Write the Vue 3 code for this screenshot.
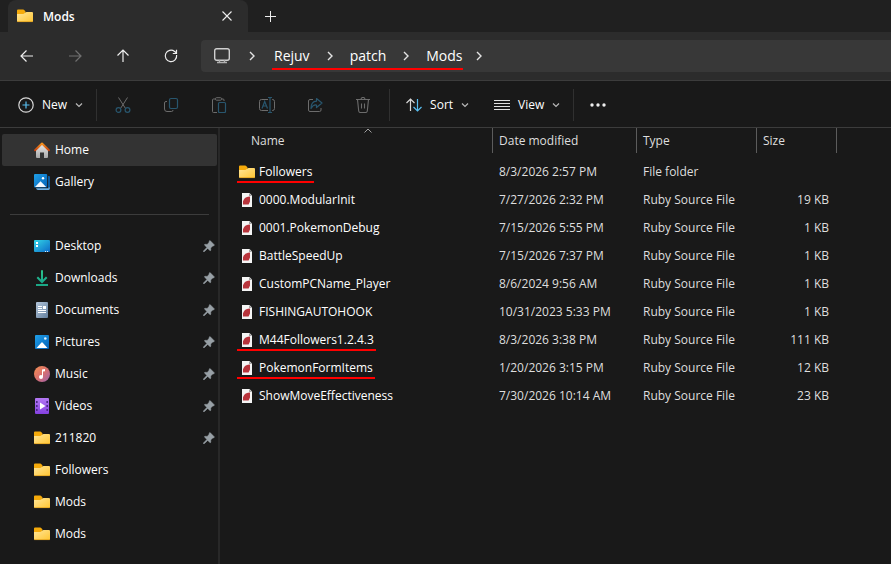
<script setup>
import { ref } from "vue";

const crumbs = ["Rejuv", "patch", "Mods"];

const tools = [
  { id: "cut", label: "Cut" },
  { id: "copy", label: "Copy" },
  { id: "paste", label: "Paste" },
  { id: "rename", label: "Rename" },
  { id: "share", label: "Share" },
  { id: "delete", label: "Delete" },
];

const mainPlaces = [
  { name: "Home", icon: "home" },
  { name: "Gallery", icon: "gallery" },
];

const quickAccess = [
  { name: "Desktop", icon: "desktop", pinned: true },
  { name: "Downloads", icon: "downloads", pinned: true },
  { name: "Documents", icon: "documents", pinned: true },
  { name: "Pictures", icon: "pictures", pinned: true },
  { name: "Music", icon: "music", pinned: true },
  { name: "Videos", icon: "videos", pinned: true },
  { name: "211820", icon: "folder", pinned: true },
  { name: "Followers", icon: "folder" },
  { name: "Mods", icon: "folder" },
  { name: "Mods", icon: "folder" },
];

const files = [
  { name: "Followers", date: "8/3/2026 2:57 PM", type: "File folder", size: "", marked: true },
  { name: "0000.ModularInit", date: "7/27/2026 2:32 PM", type: "Ruby Source File", size: "19 KB" },
  { name: "0001.PokemonDebug", date: "7/15/2026 5:55 PM", type: "Ruby Source File", size: "1 KB" },
  { name: "BattleSpeedUp", date: "7/15/2026 7:37 PM", type: "Ruby Source File", size: "1 KB" },
  { name: "CustomPCName_Player", date: "8/6/2024 9:56 AM", type: "Ruby Source File", size: "1 KB" },
  { name: "FISHINGAUTOHOOK", date: "10/31/2023 5:33 PM", type: "Ruby Source File", size: "1 KB" },
  { name: "M44Followers1.2.4.3", date: "8/3/2026 3:38 PM", type: "Ruby Source File", size: "111 KB", marked: true },
  { name: "PokemonFormItems", date: "1/20/2026 3:15 PM", type: "Ruby Source File", size: "12 KB", marked: true },
  { name: "ShowMoveEffectiveness", date: "7/30/2026 10:14 AM", type: "Ruby Source File", size: "23 KB" },
];

const activePlace = ref("Home");
</script>

<template>
  <div class="explorer">
    <svg class="sprite" width="0" height="0" aria-hidden="true">
      <defs>
        <linearGradient id="g-folder" x1="0" y1="0" x2="1" y2="1">
          <stop offset="0" stop-color="#ffe69a" />
          <stop offset="1" stop-color="#ffc532" />
        </linearGradient>
        <linearGradient id="g-roof" x1="0" y1="0" x2="0" y2="1">
          <stop offset="0" stop-color="#f7931e" />
          <stop offset="1" stop-color="#c8440f" />
        </linearGradient>
        <linearGradient id="g-wall" x1="0" y1="0" x2="0" y2="1">
          <stop offset="0" stop-color="#e8e8e8" />
          <stop offset="1" stop-color="#a8a8a8" />
        </linearGradient>
        <linearGradient id="g-blue" x1="0" y1="0" x2="1" y2="1">
          <stop offset="0" stop-color="#1fa0e8" />
          <stop offset="1" stop-color="#0562b8" />
        </linearGradient>
        <linearGradient id="g-desktop" x1="0" y1="0" x2="1" y2="1">
          <stop offset="0" stop-color="#33d6e6" />
          <stop offset="1" stop-color="#0c6ac8" />
        </linearGradient>
        <linearGradient id="g-download" x1="0" y1="0" x2="0" y2="16" gradientUnits="userSpaceOnUse">
          <stop offset="0" stop-color="#2cc48c" />
          <stop offset="1" stop-color="#14a08c" />
        </linearGradient>
        <linearGradient id="g-doc" x1="0" y1="0" x2="1" y2="1">
          <stop offset="0" stop-color="#b4c6da" />
          <stop offset="1" stop-color="#64809e" />
        </linearGradient>
        <linearGradient id="g-music" x1="0" y1="0" x2="1" y2="1">
          <stop offset="0" stop-color="#f49050" />
          <stop offset="0.5" stop-color="#d9706e" />
          <stop offset="1" stop-color="#9a60b0" />
        </linearGradient>
        <linearGradient id="g-video" x1="0" y1="0" x2="0" y2="1">
          <stop offset="0" stop-color="#b478f4" />
          <stop offset="1" stop-color="#8440e0" />
        </linearGradient>
      </defs>
      <symbol id="i-folder" viewBox="0 0 16 16">
        <path d="M0 2.500q0-1 1-1h5.200q.6 0 1 .5l1.300 1.500V7H0z" fill="#f5aa0a" />
        <path d="M0 6h6.200q.6 0 1-.4l1.300-1.100q.4-.5 1-.5H15q1 0 1 1v8q0 1-1 1H1q-1 0-1-1z" fill="url(#g-folder)" />
        <path d="M.2 13.600h15.600" stroke="#e0a01e" stroke-width=".8" />
      </symbol>
      <symbol id="i-home" viewBox="0 0 16 16">
        <path d="M2 7.500 8 2l6 5.500v7.500q0 1-1 1h-3v-5.500H6V16H3q-1 0-1-1z" fill="url(#g-wall)" />
        <path d="M1.100 8.200 8 1.500l6.900 6.700" fill="none" stroke="url(#g-roof)" stroke-width="2" stroke-linecap="round" stroke-linejoin="round" />
      </symbol>
      <symbol id="i-gallery" viewBox="0 0 16 16">
        <path d="M14 2h1q1 0 1 1v10.500q0 .5-.6.5H14z" fill="#0a5aa0" />
        <path d="M2 14.200h12.500v-.7H16q0 2.500-1.500 2.500H4q-1.500 0-2-1.800z" fill="#6aaee4" />
        <rect width="13.200" height="13.500" rx="1" fill="url(#g-blue)" />
        <circle cx="9" cy="4.200" r="1.200" fill="#fff" />
        <path d="M1 13 6.500 7.300 12.200 13z" fill="#f2f8ff" />
      </symbol>
      <symbol id="i-desktop" viewBox="0 0 16 16">
        <rect y="2" width="16" height="12" rx="1" fill="url(#g-desktop)" />
        <path d="M2 4h2v2H2zM2 7h2v2H2z" fill="#fff" />
        <path d="M11 13h1v1h-1zM13 13h1v1h-1z" fill="#d8ecfa" />
      </symbol>
      <symbol id="i-downloads" viewBox="0 0 16 16">
        <path d="M8 .3v11M3.300 7.300 8 12l4.700-4.700" fill="none" stroke="url(#g-download)" stroke-width="2" />
        <path d="M2 14h12v2H2z" fill="#1ba886" />
      </symbol>
      <symbol id="i-documents" viewBox="0 0 16 16">
        <rect x="2" width="12" height="16" rx="1" fill="url(#g-doc)" />
        <path d="M4 4h4v1H4zM4 6h4v1H4zM9 4h3v3H9zM4 8h8v1H4zM4 10h8v1H4z" fill="#fff" />
      </symbol>
      <symbol id="i-pictures" viewBox="0 0 16 16">
        <rect x="1" y="1" width="14" height="14" rx="1" fill="url(#g-blue)" />
        <circle cx="11.300" cy="4.500" r="1.300" fill="#e0f2ff" />
        <path d="m2.500 14 5-5.600q.5-.5 1 0l5 5.600z" fill="#fff" />
      </symbol>
      <symbol id="i-music" viewBox="0 0 16 16">
        <circle cx="8" cy="8" r="8" fill="url(#g-music)" />
        <path d="M8 3.500 11 3v2.200l-2 .4V11H8z" fill="#fff" />
        <circle cx="7" cy="11" r="2" fill="#fff" />
      </symbol>
      <symbol id="i-videos" viewBox="0 0 16 16">
        <rect x="1" width="14" height="16" rx="1" fill="url(#g-video)" />
        <path d="M2 3h1.600v2H2zM2 7h1.600v2H2zM2 11h1.600v2H2zM12.400 3H14v2h-1.600zM12.400 7H14v2h-1.600zM12.400 11H14v2h-1.600z" fill="#4a2a86" />
        <path d="M6 4.500v7L11.500 8z" fill="#fff" />
      </symbol>
      <symbol id="i-file" viewBox="0 0 16 16">
        <path d="M3 1h7.500L13 3.500V15H3z" fill="#f4f4f4" />
        <path d="M10 1v3h3z" fill="#a4a4a4" />
        <path d="M4 12.500V9.200Q5.500 5 9 4.700l2-.2v5L9.600 12.500z" fill="#b8343c" />
      </symbol>
      <symbol id="i-pin" viewBox="0 0 12 12">
        <path d="M7.300.8 11.200 4.700q.5.700-.4 1L9.400 6.200 7.700 8l.1 2q-.1 1-.9.500L4.700 8.400 1.200 11.800H.4V11l3.500-3.600L1.700 5.300q-.6-.9.400-1l2 .1L6 2.600l.3-1.500q.3-.8 1-.3z" fill="#98a0a6" stroke="#98a0a6" stroke-width=".5" />
      </symbol>
      <symbol id="i-chevron" viewBox="0 0 8 12">
        <path d="m2 2 4 4-4 4" fill="none" stroke="#e4e4e4" stroke-width="1.400" />
      </symbol>
      <symbol id="i-down" viewBox="0 0 8 8">
        <path d="m1 2.500 3 3 3-3" fill="none" stroke="#b8b8b8" stroke-width="1.200" />
      </symbol>
      <symbol id="i-cut" viewBox="0 0 16 16">
        <path d="M3.500.5 10.500 11.500M12.500.5 5.500 11.500" fill="none" stroke="#6c6c6c" />
        <circle cx="3.500" cy="13" r="2.400" fill="none" stroke="#28566e" stroke-width="1.200" />
        <circle cx="12.500" cy="13" r="2.400" fill="none" stroke="#28566e" stroke-width="1.200" />
      </symbol>
      <symbol id="i-copy" viewBox="0 0 16 16">
        <path d="M4 4.500H3q-1.500 0-1.500 1.500v6q0 2.500 2.500 2.500h4.500q1.500 0 1.500-1.500" fill="none" stroke="#6c6c6c" />
        <rect x="6.500" y="1.500" width="8" height="10" rx="1.500" fill="none" stroke="#28566e" stroke-width="1.200" />
      </symbol>
      <symbol id="i-paste" viewBox="0 0 16 16">
        <path d="M4.500 2h-2Q1.500 2 1.500 3v11.500q0 1 1 1H6M10.500 2h1.500q1 0 1 1v1" fill="none" stroke="#6c6c6c" />
        <rect x="4.500" y=".7" width="6" height="2.500" rx="1" fill="none" stroke="#6c6c6c" />
        <rect x="7.500" y="5.500" width="7" height="10" rx="1" fill="none" stroke="#28566e" stroke-width="1.200" />
      </symbol>
      <symbol id="i-rename" viewBox="0 0 16 16">
        <path d="M9 2.500H2.500Q.5 2.500.5 4.500v7q0 2 2 2H9M13 2.500h.5q2 0 2 2v7q0 2-2 2H13" fill="none" stroke="#6c6c6c" />
        <path d="M3 11.500 5.700 4.500 8.500 11.500M4 9h3.500M9 .5h4M11 .5v15M9 15.500h4" fill="none" stroke="#28566e" stroke-width="1.200" />
      </symbol>
      <symbol id="i-share" viewBox="0 0 16 16">
        <path d="M6 2.500H3q-1.500 0-1.500 1.500v9q0 1.500 1.500 1.500h9.500q1.500 0 1.500-1.500v-2" fill="none" stroke="#6c6c6c" />
        <path d="M9.500 1.500 15 6l-5.500 4.500V8Q6 7.500 4 11.500 4 4.500 9.500 4.200z" fill="none" stroke="#28566e" stroke-width="1.200" stroke-linejoin="round" />
      </symbol>
      <symbol id="i-delete" viewBox="0 0 16 16">
        <path d="M1 2.500h14M6 2.500q0-2 2-2t2 2M2.500 2.500l1.200 11.500q.2 1.500 1.600 1.500h5.400q1.400 0 1.600-1.500l1.200-11.500M6.500 6.500v5M9.500 6.500v5" fill="none" stroke="#6c6c6c" stroke-width="1.100" />
      </symbol>
    </svg>

    <header class="tab-strip">
      <div class="tab">
        <svg class="icon"><use href="#i-folder" /></svg>
        <span class="tab-title">Mods</span>
        <button type="button" class="icon-button tab-close" aria-label="Close tab">
          <svg width="10" height="10"><path d="m.5.5 9 9M9.500.5l-9 9" fill="none" stroke="#eee" stroke-width="1.100" /></svg>
        </button>
      </div>
      <button type="button" class="icon-button new-tab" aria-label="New tab">
        <svg width="11" height="11"><path d="M5.500 0v11M0 5.500h11" stroke="#eee" /></svg>
      </button>
    </header>

    <nav class="nav-bar" aria-label="Address">
      <button type="button" class="icon-button nav-button" aria-label="Back">
        <svg class="icon"><path d="M14 8H2M7.500 2.500 2 8l5.500 5.500" fill="none" stroke="#eee" stroke-width="1.200" /></svg>
      </button>
      <button type="button" class="icon-button nav-button" aria-label="Forward" disabled>
        <svg class="icon"><path d="M2 8h12M8.500 2.500 14 8l-5.500 5.500" fill="none" stroke="#707070" stroke-width="1.200" /></svg>
      </button>
      <button type="button" class="icon-button nav-button" aria-label="Up">
        <svg class="icon"><path d="M8 14V2M2.500 7.500 8 2l5.500 5.500" fill="none" stroke="#eee" stroke-width="1.200" /></svg>
      </button>
      <button type="button" class="icon-button nav-button" aria-label="Refresh">
        <svg class="icon"><path d="M13.600 7a5.700 5.700 0 1 1-2-3.500L13.500 5M13.500 1.800V5.500H9.800" fill="none" stroke="#eee" stroke-width="1.200" /></svg>
      </button>
      <div class="address">
        <svg class="icon monitor" viewBox="0 0 16 16">
          <rect x=".7" y=".7" width="14.600" height="11.600" rx="2" fill="none" stroke="#d0d0d0" stroke-width="1.400" />
          <path d="M5.500 12v2.500M10.500 12v2.500M3 14.500h10" fill="none" stroke="#b0b0b0" stroke-width="1.400" />
        </svg>
        <svg class="chevron"><use href="#i-chevron" /></svg>
        <div class="crumbs">
          <button v-for="(c, i) in crumbs" :key="c" type="button" class="crumb">
            {{ c }}
            <svg v-if="i < crumbs.length - 1" class="chevron"><use href="#i-chevron" /></svg>
          </button>
        </div>
        <svg class="chevron"><use href="#i-chevron" /></svg>
      </div>
    </nav>

    <div class="toolbar" role="toolbar">
      <button type="button" class="tool-menu">
        <svg class="icon">
          <circle cx="8" cy="8" r="7.200" fill="none" stroke="#d8d8d8" stroke-width="1.200" />
          <path d="M8 4.500v7M4.500 8h7" stroke="#58bef0" stroke-width="1.200" />
        </svg>
        <span>New</span>
        <svg class="down"><use href="#i-down" /></svg>
      </button>
      <div class="tool-group">
        <button v-for="t in tools" :key="t.id" type="button" class="icon-button tool" :aria-label="t.label" disabled>
          <svg class="icon"><use :href="`#i-${t.id}`" /></svg>
        </button>
      </div>
      <button type="button" class="tool-menu">
        <svg class="icon">
          <path d="M4.500 14V2M.5 6l4-4 4 4" fill="none" stroke="#d8d8d8" stroke-width="1.200" />
          <path d="M11.500 2v12M7.500 10l4 4 4-4" fill="none" stroke="#58bef0" stroke-width="1.200" />
        </svg>
        <span>Sort</span>
        <svg class="down"><use href="#i-down" /></svg>
      </button>
      <button type="button" class="tool-menu">
        <svg class="icon"><path d="M0 3.500h16M0 6.500h16M0 9.500h16M0 12.500h16" stroke="#e0e0e0" /></svg>
        <span>View</span>
        <svg class="down"><use href="#i-down" /></svg>
      </button>
      <button type="button" class="icon-button more" aria-label="See more">
        <svg class="icon">
          <circle cx="2" cy="8" r="1.700" fill="#eee" />
          <circle cx="8" cy="8" r="1.700" fill="#eee" />
          <circle cx="14" cy="8" r="1.700" fill="#eee" />
        </svg>
      </button>
    </div>

    <div class="body">
      <aside class="sidebar">
        <a
          v-for="p in mainPlaces"
          :key="p.name"
          href="#"
          class="place"
          :class="{ active: activePlace === p.name }"
          @click.prevent="activePlace = p.name"
        >
          <svg class="icon"><use :href="`#i-${p.icon}`" /></svg>
          <span>{{ p.name }}</span>
        </a>
        <hr class="divider" />
        <a v-for="(p, i) in quickAccess" :key="i" href="#" class="place" @click.prevent>
          <svg class="icon"><use :href="`#i-${p.icon}`" /></svg>
          <span>{{ p.name }}</span>
          <svg v-if="p.pinned" class="pin"><use href="#i-pin" /></svg>
        </a>
      </aside>

      <main class="content">
        <table class="files">
          <thead>
            <tr>
              <th class="col-name">
                Name
                <svg class="sort-mark" width="8" height="5"><path d="m.5 4.500 3.500-3.500 3.500 3.500" fill="none" stroke="#a0a0a0" /></svg>
              </th>
              <th class="col-date">Date modified</th>
              <th class="col-type">Type</th>
              <th class="col-size">Size</th>
              <td></td>
            </tr>
          </thead>
          <tbody>
            <tr v-for="f in files" :key="f.name">
              <td class="cell-name">
                <span class="file" :class="{ marked: f.marked }">
                  <svg class="icon"><use :href="f.size ? '#i-file' : '#i-folder'" /></svg>
                  {{ f.name }}
                </span>
              </td>
              <td>{{ f.date }}</td>
              <td>{{ f.type }}</td>
              <td class="cell-size">{{ f.size }}</td>
              <td></td>
            </tr>
          </tbody>
        </table>
      </main>
    </div>
  </div>
</template>

<style>
body {
  margin: 0;
  background: #191919;
}
</style>

<style scoped>
.explorer {
  display: flex;
  flex-direction: column;
  min-height: 100vh;
  overflow: hidden;
  background: #191919;
  color: #fff;
  font-family: "Open Sans", "Noto Sans", sans-serif;
  font-size: 12px;
  line-height: 16px;
}

.sprite {
  position: absolute;
}

button {
  padding: 0;
  border: 0;
  background: none;
  color: inherit;
  font: inherit;
}

svg {
  display: block;
  flex: none;
}

.icon {
  width: 16px;
  height: 16px;
}

.chevron {
  width: 8px;
  height: 12px;
}

.down {
  width: 8px;
  height: 8px;
}

.icon-button {
  display: grid;
  place-items: center;
}

.tab-strip {
  display: flex;
  height: 32px;
  padding-left: 8px;
  background: #202020;
}

.tab {
  box-sizing: border-box;
  display: flex;
  align-items: center;
  gap: 10px;
  width: 240px;
  padding: 0 9px;
  border-radius: 8px 8px 0 0;
  background: #2c2c2c;
}

.tab-title {
  flex: 1;
  padding-top: 2px;
  font-weight: 600;
}

.tab-close {
  width: 24px;
  height: 24px;
}

.new-tab {
  width: 44px;
}

.nav-bar {
  display: flex;
  align-items: center;
  height: 48px;
  padding-left: 3px;
  background: #2c2c2c;
  border-bottom: 1px solid #3c3c3c;
}

.nav-button {
  width: 48px;
  height: 32px;
}

.address {
  flex: 1;
  display: flex;
  align-items: center;
  height: 32px;
  margin-left: 6px;
  padding-left: 13px;
  border-radius: 4px 0 0 4px;
  background: #383838;
  font-size: 14px;
}

.monitor {
  margin-right: 18px;
}

.crumbs {
  display: flex;
  gap: 16px;
  height: 28px;
  margin: 0 12px 0 16px;
  padding: 2px 0 0 2px;
  border-bottom: 2px solid #f00;
  box-sizing: border-box;
}

.crumb {
  display: flex;
  align-items: center;
  gap: 16px;
}

.toolbar {
  display: flex;
  align-items: center;
  height: 47px;
  padding: 2px 0 0 6px;
  box-sizing: border-box;
  border-bottom: 1px solid #3c3c3c;
  font-weight: 500;
}

.tool-menu {
  display: flex;
  align-items: center;
  gap: 8px;
  height: 32px;
  padding: 0 13px 0 12px;
}

.tool-group {
  display: flex;
  padding: 0 2px;
  border: 1px solid #303030;
  border-width: 0 1px;
  margin-right: 4px;
}

.tool {
  width: 48px;
  height: 32px;
}

.more {
  width: 48px;
  height: 32px;
  border-left: 1px solid #303030;
}

.body {
  flex: 1;
  display: flex;
}

.sidebar {
  box-sizing: border-box;
  flex: none;
  width: 220px;
  padding: 6px 1px 12px 2px;
  border-right: 2px solid #282828;
}

.place {
  display: flex;
  align-items: center;
  gap: 5px;
  height: 32px;
  padding: 0 2px 0 32px;
  color: #fff;
  text-decoration: none;
}

.place.active {
  background: #333;
  border-radius: 2px;
}

.pin {
  width: 12px;
  height: 12px;
  margin-left: auto;
}

.divider {
  height: 1px;
  margin: 16px 8px 15px;
  border: 0;
  background: #3c3c3c;
}

.content {
  flex: 1;
  min-width: 0;
}

.files {
  width: 100%;
  table-layout: fixed;
  border-collapse: separate;
  border-spacing: 0;
}

.files th {
  position: relative;
  height: 25px;
  padding: 0 6px;
  border-right: 1px solid #5c5c5c;
  color: #dedede;
  font-weight: 400;
  text-align: left;
}

.files .col-name {
  width: 235px;
  padding-left: 31px;
}

.col-date {
  width: 131px;
}

.col-type {
  width: 107px;
}

.col-size {
  width: 67px;
}

.sort-mark {
  position: absolute;
  top: 0;
  left: 144px;
}

.files td {
  height: 28px;
  padding: 0 8px 0 6px;
  color: #dedede;
  white-space: nowrap;
}

.files thead td {
  height: 25px;
}

.files tbody::before {
  content: "";
  display: block;
  height: 5px;
}

.files .cell-name {
  padding-left: 19px;
  color: #fff;
}

.files .cell-size {
  text-align: right;
}

.file {
  position: relative;
  display: inline-flex;
  align-items: center;
  gap: 4px;
  vertical-align: middle;
}

.file.marked::after {
  content: "";
  position: absolute;
  right: -2px;
  bottom: -3px;
  left: -2px;
  height: 2px;
  background: #f00;
}
</style>
